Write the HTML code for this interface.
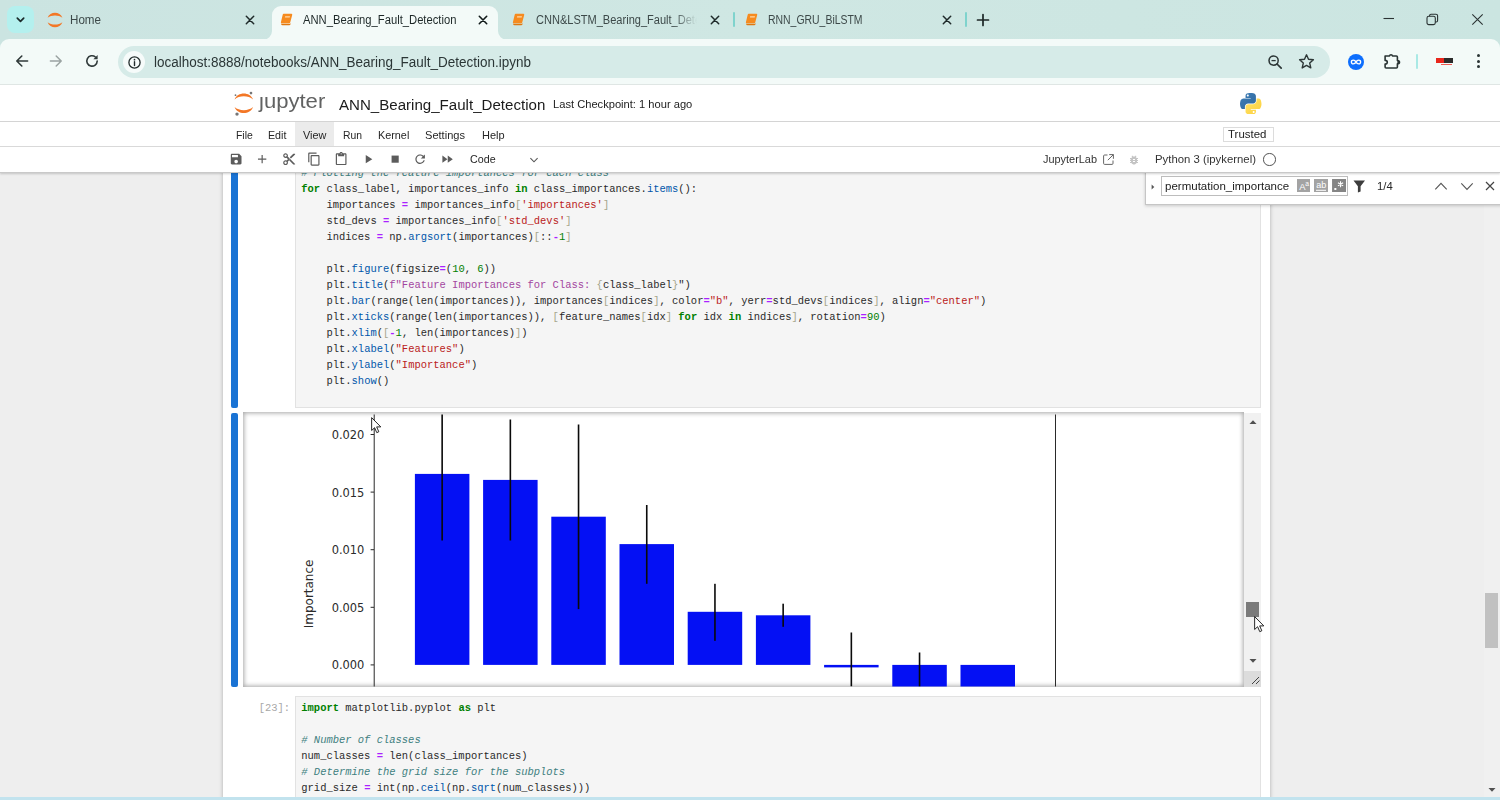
<!DOCTYPE html>
<html lang="en">
<head>
<meta charset="utf-8">
<title>ANN_Bearing_Fault_Detection</title>
<style>
*{box-sizing:border-box;margin:0;padding:0}
html,body{width:1500px;height:800px;overflow:hidden;background:#eeeeee;font-family:"Liberation Sans",sans-serif;color:#1f1f1f}
.abs{position:absolute}
#root{position:relative;width:1500px;height:800px;overflow:hidden}
/* ---------- browser chrome ---------- */
#tabstrip{left:0;top:0;width:1500px;height:52px;background:linear-gradient(90deg,#cbe4e1 0%,#cfe7e3 50%,#cbe5e1 100%)}
#toolbar{left:0;top:39px;width:1500px;height:46px;background:#f3faf8;border-radius:9px 9px 0 0;border-bottom:1px solid #dfe6e4}
#acttab{left:272px;top:6px;width:226px;height:34px;background:#f3faf8;border-radius:9px 9px 0 0}
.tabtxt{font-size:12px;line-height:14px;white-space:nowrap;color:#3d4949;top:13.3px}
.tsep{width:2px;height:15px;top:12px;background:#7fd3cd;border-radius:1px}
#omni{left:118px;top:46px;width:1212px;height:32px;border-radius:16px;background:#d6ebe8}
#url{left:153.6px;top:52.6px;font-size:14px;line-height:18px;color:#2b3636;white-space:nowrap;transform-origin:0 0;transform:scaleX(.963)}
/* ---------- jupyter ---------- */
#jhead{left:0;top:85px;width:1500px;height:37px;background:#fff;border-bottom:1px solid #d4d4d4}
#jmenu{left:0;top:122px;width:1500px;height:25px;background:#fff;border-bottom:1px solid #d9d9d9}
#jtool{left:0;top:147px;width:1500px;height:26px;background:#fff;border-bottom:1px solid #c9c9c9;box-shadow:0 1px 2px rgba(0,0,0,.18)}
.mi{top:128px;font-size:12.3px;line-height:14px;color:#262626;white-space:nowrap}
#nb{left:222.6px;top:172px;width:1047px;height:628px;background:#fff;box-shadow:0 0 4px rgba(0,0,0,.28)}
.coll{left:231.3px;width:7px;background:#1a73d4;border-radius:2px}
.ed{left:295px;width:966px;background:#f5f5f5;border:1px solid #e2e2e2}
.code{font-family:"Liberation Mono",monospace;font-size:10.48px;line-height:16px;white-space:pre;color:#2a2a2a;left:301px}
.k{color:#008000;font-weight:bold}.s{color:#ba2121}.n{color:#008000}.o{color:#aa22ff;font-weight:bold}.p{color:#0055aa}.c{color:#408080;font-style:italic}.b{color:#a6a68c}.fs{color:#a3469f}
</style>
</head>
<body>
<div id="root">
<!-- ================= BROWSER CHROME ================= -->
<div id="tabstrip" class="abs"></div>
<div id="toolbar" class="abs"></div>
<div id="acttab" class="abs"></div>
<!-- tab search button -->
<div class="abs" style="left:7px;top:6px;width:27px;height:27px;border-radius:8px;background:#b4f0ee"></div>
<svg class="abs" style="left:14px;top:15px" width="13" height="10" viewBox="0 0 13 10"><path d="M3.3 3.2 L6.5 6.4 L9.7 3.2" fill="none" stroke="#1c2b2b" stroke-width="1.7" stroke-linecap="round" stroke-linejoin="round"/></svg>
<!-- tab 1 : Home -->
<svg class="abs" style="left:46px;top:11px" width="18" height="18" viewBox="0 0 18 18"><path d="M1.6 6.8 C4 0.2 14 0.2 16.4 6.8 C12.6 3.6 5.4 3.6 1.6 6.8 Z" fill="#f37726"/><path d="M1.6 11.2 C4 17.8 14 17.8 16.4 11.2 C12.6 14.4 5.4 14.4 1.6 11.2 Z" fill="#f37726"/></svg>
<div class="abs tabtxt" style="left:70.4px;font-size:12px;transform-origin:0 0;transform:scaleX(.968)">Home</div>
<svg class="abs" style="left:245px;top:15px" width="10" height="10" viewBox="0 0 10 10"><path d="M1.3 1.3 L8.7 8.7 M8.7 1.3 L1.3 8.7" stroke="#1f2a2a" stroke-width="1.5" stroke-linecap="round"/></svg>
<!-- active tab curved feet -->
<svg class="abs" style="left:263px;top:31px" width="9" height="9" viewBox="0 0 9 9"><path d="M9 0 L9 9 L0 9 A9 9 0 0 0 9 0 Z" fill="#f3faf8"/></svg>
<svg class="abs" style="left:498px;top:31px" width="9" height="9" viewBox="0 0 9 9"><path d="M0 0 L0 9 L9 9 A9 9 0 0 1 0 0 Z" fill="#f3faf8"/></svg>
<!-- tab 2 : active -->
<svg class="abs book" style="left:279.5px;top:13px" width="13" height="13" viewBox="0 0 13 13"><path d="M3.6 0.8 H11.4 Q12.5 0.8 12.2 1.9 L10.2 9.6 Q10 10.5 9 10.5 H1.9 Q0.6 10.5 0.9 9.3 L2.7 1.8 Q2.9 0.8 3.6 0.8 Z" fill="#f68b1f"/><path d="M1.2 10.4 Q0.9 12.3 2.6 12.3 H9.2 Q10.2 12.3 10.5 11.2 L10.8 10 Q10.3 10.9 9.2 10.9 H2.4 Q1.5 10.9 1.2 10.4 Z" fill="#e0780f"/><path d="M5.2 3.2 H10 L9.7 4.5 H4.9 Z" fill="#ffd9a8"/></svg>
<div class="abs tabtxt" style="left:303px;color:#1c2727;font-size:12px;transform-origin:0 0;transform:scaleX(.935)">ANN_Bearing_Fault_Detection</div>
<svg class="abs" style="left:477.5px;top:15px" width="10" height="10" viewBox="0 0 10 10"><path d="M1.3 1.3 L8.7 8.7 M8.7 1.3 L1.3 8.7" stroke="#111a1a" stroke-width="1.6" stroke-linecap="round"/></svg>
<!-- tab 3 -->
<svg class="abs book" style="left:512px;top:13px" width="13" height="13" viewBox="0 0 13 13"><path d="M3.6 0.8 H11.4 Q12.5 0.8 12.2 1.9 L10.2 9.6 Q10 10.5 9 10.5 H1.9 Q0.6 10.5 0.9 9.3 L2.7 1.8 Q2.9 0.8 3.6 0.8 Z" fill="#f68b1f"/><path d="M1.2 10.4 Q0.9 12.3 2.6 12.3 H9.2 Q10.2 12.3 10.5 11.2 L10.8 10 Q10.3 10.9 9.2 10.9 H2.4 Q1.5 10.9 1.2 10.4 Z" fill="#e0780f"/><path d="M5.2 3.2 H10 L9.7 4.5 H4.9 Z" fill="#ffd9a8"/></svg>
<div class="abs tabtxt" style="left:535.5px;width:176px;overflow:hidden;font-size:12px;transform-origin:0 0;transform:scaleX(.92);-webkit-mask-image:linear-gradient(90deg,#000 0,#000 150px,transparent 175px);mask-image:linear-gradient(90deg,#000 0,#000 150px,transparent 175px)">CNN&amp;LSTM_Bearing_Fault_Detection</div>
<svg class="abs" style="left:710px;top:15px" width="10" height="10" viewBox="0 0 10 10"><path d="M1.3 1.3 L8.7 8.7 M8.7 1.3 L1.3 8.7" stroke="#1f2a2a" stroke-width="1.5" stroke-linecap="round"/></svg>
<div class="abs tsep" style="left:733px"></div>
<!-- tab 4 -->
<svg class="abs book" style="left:745px;top:13px" width="13" height="13" viewBox="0 0 13 13"><path d="M3.6 0.8 H11.4 Q12.5 0.8 12.2 1.9 L10.2 9.6 Q10 10.5 9 10.5 H1.9 Q0.6 10.5 0.9 9.3 L2.7 1.8 Q2.9 0.8 3.6 0.8 Z" fill="#f68b1f"/><path d="M1.2 10.4 Q0.9 12.3 2.6 12.3 H9.2 Q10.2 12.3 10.5 11.2 L10.8 10 Q10.3 10.9 9.2 10.9 H2.4 Q1.5 10.9 1.2 10.4 Z" fill="#e0780f"/><path d="M5.2 3.2 H10 L9.7 4.5 H4.9 Z" fill="#ffd9a8"/></svg>
<div class="abs tabtxt" style="left:768px;font-size:12px;transform-origin:0 0;transform:scaleX(.87)">RNN_GRU_BiLSTM</div>
<svg class="abs" style="left:942px;top:15px" width="10" height="10" viewBox="0 0 10 10"><path d="M1.3 1.3 L8.7 8.7 M8.7 1.3 L1.3 8.7" stroke="#1f2a2a" stroke-width="1.5" stroke-linecap="round"/></svg>
<div class="abs tsep" style="left:965px"></div>
<svg class="abs" style="left:976px;top:13px" width="14" height="14" viewBox="0 0 14 14"><path d="M7 1.5 V12.5 M1.5 7 H12.5" stroke="#1c2626" stroke-width="1.7" stroke-linecap="round"/></svg>
<!-- window controls -->
<svg class="abs" style="left:1382px;top:12px" width="14" height="14" viewBox="0 0 14 14"><path d="M1.5 6.5 H12" stroke="#2a3333" stroke-width="1.1"/></svg>
<svg class="abs" style="left:1426px;top:13px" width="13" height="13" viewBox="0 0 13 13"><rect x="1" y="3.3" width="8.3" height="8.3" rx="1.8" fill="none" stroke="#2a3333" stroke-width="1.1"/><path d="M3.6 3.2 V2.6 Q3.6 1.2 5 1.2 H10 Q11.6 1.2 11.6 2.8 V7.6 Q11.6 9 10.2 9 H9.4" fill="none" stroke="#2a3333" stroke-width="1.1"/></svg>
<svg class="abs" style="left:1471px;top:13px" width="13" height="13" viewBox="0 0 13 13"><path d="M1.3 1.3 L11.7 11.7 M11.7 1.3 L1.3 11.7" stroke="#2a3333" stroke-width="1.1"/></svg>
<!-- nav buttons -->
<svg class="abs" style="left:14px;top:53px" width="16" height="16" viewBox="0 0 16 16"><path d="M13.6 8 H3 M7.8 3 L2.8 8 L7.8 13" fill="none" stroke="#303a3a" stroke-width="1.6" stroke-linecap="round" stroke-linejoin="round"/></svg>
<svg class="abs" style="left:48px;top:53px" width="16" height="16" viewBox="0 0 16 16"><path d="M2.4 8 H13 M8.2 3 L13.2 8 L8.2 13" fill="none" stroke="#9aa3a2" stroke-width="1.5" stroke-linecap="round" stroke-linejoin="round"/></svg>
<svg class="abs" style="left:84px;top:53px" width="16" height="16" viewBox="0 0 16 16"><path d="M13.2 8 A5.2 5.2 0 1 1 11.4 4" fill="none" stroke="#303a3a" stroke-width="1.6" stroke-linecap="round"/><path d="M13.6 2 V6.2 H9.4 Z" fill="#303a3a"/></svg>

<div id="omni" class="abs"></div>
<div id="url" class="abs">localhost:8888/notebooks/ANN_Bearing_Fault_Detection.ipynb</div>
<!-- omnibox icons -->
<div class="abs" style="left:123px;top:51px;width:22px;height:22px;border-radius:11px;background:#f6fbfa"></div>
<svg class="abs" style="left:126.5px;top:54.5px" width="15" height="15" viewBox="0 0 15 15"><circle cx="7.5" cy="7.5" r="5.6" fill="none" stroke="#222c2c" stroke-width="1.3"/><path d="M7.5 6.8 V10.6" stroke="#222c2c" stroke-width="1.4" stroke-linecap="round"/><circle cx="7.5" cy="4.7" r=".85" fill="#222c2c"/></svg>
<svg class="abs" style="left:1267px;top:54px" width="16" height="16" viewBox="0 0 16 16"><circle cx="6.6" cy="6.6" r="4.6" fill="none" stroke="#2c3636" stroke-width="1.5"/><path d="M10 10 L14.2 14.2" stroke="#2c3636" stroke-width="1.7" stroke-linecap="round"/><path d="M4.5 6.6 H8.7" stroke="#2c3636" stroke-width="1.3"/></svg>
<svg class="abs" style="left:1298px;top:52.5px" width="17" height="17" viewBox="0 0 17 17"><path d="M8.5 1.8 L10.5 6.3 L15.4 6.8 L11.7 10.1 L12.8 14.9 L8.5 12.4 L4.2 14.9 L5.3 10.1 L1.6 6.8 L6.5 6.3 Z" fill="none" stroke="#2c3636" stroke-width="1.4" stroke-linejoin="round"/></svg>
<!-- extension icons -->
<div class="abs" style="left:1348px;top:54px;width:16px;height:16px;border-radius:8px;background:#0d6efd"></div>
<svg class="abs" style="left:1350px;top:58px" width="12" height="8" viewBox="0 0 12 8"><path d="M6 4 C4.8 1.6 1.4 1.4 1.4 4 C1.4 6.6 4.8 6.4 6 4 C7.2 1.6 10.6 1.4 10.6 4 C10.6 6.6 7.2 6.4 6 4 Z" fill="none" stroke="#fff" stroke-width="1.4"/></svg>
<svg class="abs" style="left:1383px;top:52px" width="18" height="18" viewBox="0 0 18 18"><path d="M2.1 4 H6.500 Q6.700 2.700 8 2.700 Q9.300 2.700 9.500 4 H13.400 Q14.400 4 14.400 5 V8.500 Q16.500 8.700 16.500 10.200 Q16.500 11.700 14.400 11.900 V15 Q14.400 16 13.400 16 H3.100 Q2.100 16 2.100 15 V12 Q4.300 11.900 4.300 10.200 Q4.300 8.500 2.100 8.400 Z" fill="none" stroke="#2a3434" stroke-width="1.600" stroke-linejoin="round"/><path d="M14.400 8.500 Q16.500 8.700 16.500 10.200 Q16.500 11.700 14.400 11.900 Z" fill="#2a3434"/></svg>
<div class="abs" style="left:1416px;top:53.5px;width:2px;height:15px;border-radius:1px;background:#a9e9e5"></div>
<div class="abs" style="left:1435.5px;top:58px;width:8px;height:5px;background:#e8261c"></div>
<div class="abs" style="left:1444px;top:58px;width:8.5px;height:5px;background:#2b2b2b"></div>
<div class="abs" style="left:1441px;top:63.5px;width:11px;height:1.5px;background:#e8261c;opacity:.75"></div>
<div class="abs" style="left:1477px;top:53.700px;width:3px;height:3px;border-radius:2px;background:#2a3434"></div>
<div class="abs" style="left:1477px;top:59.700px;width:3px;height:3px;border-radius:2px;background:#2a3434"></div>
<div class="abs" style="left:1477px;top:65.400px;width:3px;height:3px;border-radius:2px;background:#2a3434"></div>
<!-- ================= JUPYTER ================= -->
<div id="nb" class="abs"></div>
<div class="abs coll" style="top:166px;height:241.5px"></div>
<div class="abs ed" style="top:160px;height:248px"></div>
<div class="abs code" style="left:301.3px;top:164.5px"><span class="c"># Plotting the feature importances for each class</span></div>
<div class="abs code" style="left:301.3px;top:180.5px"><span class="k">for</span> class_label, importances_info <span class="k">in</span> class_importances.<span class="p">items</span>():</div>
<div class="abs code" style="left:301.3px;top:196.5px">    importances <span class="o">=</span> importances_info<span class="b">[</span><span class="s">'importances'</span><span class="b">]</span></div>
<div class="abs code" style="left:301.3px;top:212.5px">    std_devs <span class="o">=</span> importances_info<span class="b">[</span><span class="s">'std_devs'</span><span class="b">]</span></div>
<div class="abs code" style="left:301.3px;top:228.5px">    indices <span class="o">=</span> np.<span class="p">argsort</span>(importances)<span class="b">[</span>::<span class="o">-</span><span class="n">1</span><span class="b">]</span></div>
<div class="abs code" style="left:301.3px;top:260.5px">    plt.<span class="p">figure</span>(figsize<span class="o">=</span>(<span class="n">10</span>, <span class="n">6</span>))</div>
<div class="abs code" style="left:301.3px;top:276.5px">    plt.<span class="p">title</span>(<span class="fs">f"Feature Importances for Class: </span><span class="b">{</span>class_label<span class="b">}</span>")</div>
<div class="abs code" style="left:301.3px;top:292.5px">    plt.<span class="p">bar</span>(range(len(importances)), importances<span class="b">[</span>indices<span class="b">]</span>, color<span class="o">=</span><span class="s">"b"</span>, yerr<span class="o">=</span>std_devs<span class="b">[</span>indices<span class="b">]</span>, align<span class="o">=</span><span class="s">"center"</span>)</div>
<div class="abs code" style="left:301.3px;top:308.5px">    plt.<span class="p">xticks</span>(range(len(importances)), <span class="b">[</span>feature_names<span class="b">[</span>idx<span class="b">]</span> <span class="k">for</span> idx <span class="k">in</span> indices<span class="b">]</span>, rotation<span class="o">=</span><span class="n">90</span>)</div>
<div class="abs code" style="left:301.3px;top:324.5px">    plt.<span class="p">xlim</span>(<span class="b">[</span><span class="o">-</span><span class="n">1</span>, len(importances)<span class="b">]</span>)</div>
<div class="abs code" style="left:301.3px;top:340.5px">    plt.<span class="p">xlabel</span>(<span class="s">"Features"</span>)</div>
<div class="abs code" style="left:301.3px;top:356.5px">    plt.<span class="p">ylabel</span>(<span class="s">"Importance"</span>)</div>
<div class="abs code" style="left:301.3px;top:372.5px">    plt.<span class="p">show</span>()</div>
<div class="abs coll" style="top:412.7px;height:274.1px"></div>
<div class="abs" style="left:243.4px;top:412.2px;width:1000.6px;height:274.8px;background:#fff;box-shadow:inset 0 0 4.5px 1.2px rgba(0,0,0,.33)"></div>
<svg class="abs" style="left:243.4px;top:412.5px" width="1000.6" height="274" viewBox="243.4 412.5 1000.6 274" font-family="DejaVu Sans, Liberation Sans, sans-serif"><defs><clipPath id="cc"><rect x="245" y="414" width="998" height="272"/></clipPath></defs><g clip-path="url(#cc)"><rect x="415.3" y="473.4" width="54.5" height="191.0" fill="#0410f4"/><rect x="441.75" y="413" width="1.6" height="127.0" fill="#0a0a0a"/><rect x="483.5" y="479.4" width="54.5" height="185.0" fill="#0410f4"/><rect x="509.95" y="419" width="1.6" height="121.0" fill="#0a0a0a"/><rect x="551.7" y="516.2" width="54.5" height="148.2" fill="#0410f4"/><rect x="578.15" y="424" width="1.6" height="184.6" fill="#0a0a0a"/><rect x="619.9" y="543.6" width="54.5" height="120.8" fill="#0410f4"/><rect x="646.35" y="504.5" width="1.6" height="78.8" fill="#0a0a0a"/><rect x="688.1" y="611.3" width="54.5" height="53.1" fill="#0410f4"/><rect x="714.55" y="583.3" width="1.6" height="57.0" fill="#0a0a0a"/><rect x="756.3" y="614.8" width="54.5" height="49.6" fill="#0410f4"/><rect x="782.75" y="603.2" width="1.6" height="23.1" fill="#0a0a0a"/><rect x="824.5" y="664.4" width="54.5" height="2.5" fill="#0410f4"/><rect x="850.95" y="632" width="1.6" height="54.0" fill="#0a0a0a"/><rect x="892.7" y="664.4" width="54.5" height="30" fill="#0410f4"/><rect x="919.15" y="652" width="1.6" height="34.0" fill="#0a0a0a"/><rect x="960.9" y="664.4" width="54.5" height="30" fill="#0410f4"/><rect x="374.1" y="412" width="1" height="276" fill="#2a2a2a"/><rect x="1055.4" y="412" width="1" height="276" fill="#2a2a2a"/><rect x="371" y="433.5" width="3.4" height="1" fill="#2a2a2a"/><text x="364.8" y="438.5" font-size="11.45" text-anchor="end" fill="#2b2b2b">0.020</text><rect x="371" y="491.1" width="3.4" height="1" fill="#2a2a2a"/><text x="364.8" y="496.1" font-size="11.45" text-anchor="end" fill="#2b2b2b">0.015</text><rect x="371" y="548.7" width="3.4" height="1" fill="#2a2a2a"/><text x="364.8" y="553.7" font-size="11.45" text-anchor="end" fill="#2b2b2b">0.010</text><rect x="371" y="606.3" width="3.4" height="1" fill="#2a2a2a"/><text x="364.8" y="611.3" font-size="11.45" text-anchor="end" fill="#2b2b2b">0.005</text><rect x="371" y="663.9" width="3.4" height="1" fill="#2a2a2a"/><text x="364.8" y="668.9" font-size="11.45" text-anchor="end" fill="#2b2b2b">0.000</text><text transform="translate(313 593.4) rotate(-90)" font-size="12" text-anchor="middle" fill="#2b2b2b">Importance</text></g></svg>
<div class="abs" style="left:1244px;top:412.5px;width:16.5px;height:274px;background:#f1f1f1"></div>
<svg class="abs" style="left:1248.5px;top:419px" width="8" height="6" viewBox="0 0 8 6"><path d="M0.500 5 L4 1.200 L7.500 5 Z" fill="#505050"/></svg>
<svg class="abs" style="left:1248.5px;top:658px" width="8" height="6" viewBox="0 0 8 6"><path d="M0.500 1 L4 4.800 L7.500 1 Z" fill="#505050"/></svg>
<div class="abs" style="left:1246.3px;top:601.5px;width:12.8px;height:15.5px;background:#7b7b7b"></div>
<div class="abs" style="left:1244px;top:670.5px;width:16.5px;height:16px;background:#dcdcdc"></div>
<svg class="abs" style="left:1249px;top:674px" width="12" height="12" viewBox="0 0 12 12"><path d="M3 10 L10 3 M7 10 L10.500 6.500" stroke="#444" stroke-width="1"/></svg>
<div class="abs ed" style="top:696px;height:120px"></div>
<div class="abs code" style="left:258.7px;top:700.0px;color:#a8a8a8">[23]:</div>
<div class="abs code" style="left:301.3px;top:700.0px"><span class="k">import</span> matplotlib.pyplot <span class="k">as</span> plt</div>
<div class="abs code" style="left:301.3px;top:732.0px"><span class="c"># Number of classes</span></div>
<div class="abs code" style="left:301.3px;top:748.0px">num_classes <span class="o">=</span> len(class_importances)</div>
<div class="abs code" style="left:301.3px;top:764.0px"><span class="c"># Determine the grid size for the subplots</span></div>
<div class="abs code" style="left:301.3px;top:780.0px">grid_size <span class="o">=</span> int(np.<span class="p">ceil</span>(np.<span class="p">sqrt</span>(num_classes)))</div>
<svg class="abs" style="left:370.9px;top:417px" width="10.8" height="17.1" viewBox="0 0 12 19"><path d="M0.700 0.700 V15 L4 11.900 L6.400 17.400 L8.700 16.400 L6.300 11 H10.900 Z" fill="#fff" stroke="#111" stroke-width="1" stroke-linejoin="round"/></svg>
<svg class="abs" style="left:1253.8px;top:616.3px" width="10.8" height="17.1" viewBox="0 0 12 19"><path d="M0.700 0.700 V15 L4 11.900 L6.400 17.400 L8.700 16.400 L6.300 11 H10.900 Z" fill="#fff" stroke="#111" stroke-width="1" stroke-linejoin="round"/></svg>
<div class="abs" style="left:1484px;top:172px;width:16px;height:626px;background:#f0f0f0"></div>
<div class="abs" style="left:1485.3px;top:593px;width:12.7px;height:54.600px;background:#c1c1c1"></div>
<svg class="abs" style="left:1487.600px;top:786.500px" width="8" height="6" viewBox="0 0 8 6"><path d="M0.500 1 L4 4.800 L7.500 1 Z" fill="#505050"/></svg>
<div class="abs" style="left:1144.5px;top:165px;width:360px;height:40.300px;background:#fff;border:1px solid #c6c6c6;box-shadow:0 1px 3px rgba(0,0,0,.18)"></div>
<svg class="abs" style="left:1151px;top:183.500px" width="4" height="6" viewBox="0 0 4 6"><path d="M0.600 0.600 L3.300 3 L0.600 5.400 Z" fill="#555"/></svg>
<div class="abs" style="left:1161px;top:176.400px;width:187.300px;height:20px;border:1px solid #bdbdbd;background:#fff"></div>
<div class="abs " style="left:1164.7px;top:178.71px;font-size:11.8px;line-height:15px;white-space:nowrap;color:#1c1c1c;transform-origin:0 0;transform:scaleX(0.9760);">permutation_importance</div>
<svg class="abs" style="left:1296.5px;top:178.800px" width="13.9" height="13.700" viewBox="0 0 14 13.700"><rect width="14" height="13.700" fill="#a3a3a3"/><text x="2.200" y="11.300" font-size="9.500" fill="#fff" font-family="Liberation Sans, sans-serif">A</text><text x="8.300" y="6.800" font-size="6.800" fill="#fff" font-family="Liberation Sans, sans-serif">a</text></svg>
<svg class="abs" style="left:1314px;top:178.800px" width="14" height="13.700" viewBox="0 0 14 13.700"><rect width="14" height="13.700" fill="#a3a3a3"/><text x="2.300" y="9.300" font-size="9" fill="#fff" font-family="Liberation Sans, sans-serif">ab</text><rect x="2" y="10.800" width="10" height="1" fill="#fff"/></svg>
<svg class="abs" style="left:1331.6px;top:178.800px" width="14.1" height="13.700" viewBox="0 0 14 13.700"><rect width="14" height="13.700" fill="#858585"/><rect x="2.300" y="9" width="2" height="2" fill="#fff"/><path d="M8.500 2.200 V8.200 M5.900 3.700 L11.100 6.700 M11.100 3.700 L5.900 6.700" stroke="#fff" stroke-width="1.100"/></svg>
<svg class="abs" style="left:1352.500px;top:180px" width="12.500" height="13" viewBox="0 0 12.500 13"><path d="M0.500 0.600 H12 L7.600 6.200 V11.600 L4.900 12.600 V6.200 Z" fill="#3d3d3d"/></svg>
<div class="abs " style="left:1377.0px;top:178.71px;font-size:11.8px;line-height:15px;white-space:nowrap;color:#262626;transform-origin:0 0;transform:scaleX(0.9571);">1/4</div>
<svg class="abs" style="left:1433.500px;top:181px" width="14" height="11" viewBox="0 0 14 11"><path d="M1.300 8.400 L7 2.400 L12.700 8.400" fill="none" stroke="#555" stroke-width="1.100"/></svg>
<svg class="abs" style="left:1459.500px;top:181px" width="14" height="11" viewBox="0 0 14 11"><path d="M1.300 2.400 L7 8.400 L12.700 2.400" fill="none" stroke="#555" stroke-width="1.100"/></svg>
<svg class="abs" style="left:1484.500px;top:181.400px" width="10" height="10" viewBox="0 0 10 10"><path d="M1 1 L9 9 M9 1 L1 9" stroke="#444" stroke-width="1.200"/></svg>
<div class="abs" style="left:0;top:797.300px;width:1500px;height:3px;background:#c2e3ee"></div>

<div id="jtool" class="abs"></div>
<div id="jmenu" class="abs"></div>
<div id="jhead" class="abs"></div>
<svg class="abs" style="left:232px;top:90px" width="24" height="27" viewBox="0 0 24 27"><path d="M2.6 9.4 C5.4 1.4 18.2 1.4 21 9.4 C16.6 5.2 7 5.2 2.6 9.4 Z" fill="#f37726"/><path d="M2.6 17 C5.4 25 18.2 25 21 17 C16.6 21.2 7 21.2 2.6 17 Z" fill="#f37726"/><circle cx="19" cy="3.1" r="1.35" fill="#767677"/><circle cx="3.5" cy="5.2" r=".9" fill="#767677"/><circle cx="5" cy="24.1" r="1.7" fill="#767677"/></svg>
<div class="abs " style="left:258.8px;top:88.64px;font-size:19.8px;line-height:25px;white-space:nowrap;color:#616262;transform-origin:0 0;transform:scaleX(1.1156);">jupyter</div>
<div class="abs" style="left:259px;top:91.5px;width:6px;height:4.5px;background:#fff"></div>
<div class="abs " style="left:339.3px;top:95.16px;font-size:15.4px;line-height:19px;white-space:nowrap;color:#1b1b1b;transform-origin:0 0;transform:scaleX(0.9801);">ANN_Bearing_Fault_Detection</div>
<div class="abs " style="left:553.3px;top:96.98px;font-size:11.6px;line-height:14px;white-space:nowrap;color:#222;transform-origin:0 0;transform:scaleX(0.9607);">Last Checkpoint: 1 hour ago</div>
<svg class="abs" style="left:1240.3px;top:92.8px" width="21.5" height="21.4" viewBox="0 0 111.2 110.4"><defs><linearGradient id="pyb" x1="0" y1="0" x2="1" y2="1"><stop offset="0" stop-color="#3f7fb8"/><stop offset="1" stop-color="#2f689c"/></linearGradient><linearGradient id="pyy" x1="0" y1="0" x2="1" y2="1"><stop offset="0" stop-color="#ffe36a"/><stop offset="1" stop-color="#fccf3a"/></linearGradient></defs><path fill="url(#pyb)" d="M54.92 0c-4.58.02-8.96.41-12.81 1.09C30.760 3.090 28.700 7.290 28.700 15.030v10.220h26.810v3.410H18.640c-7.790 0-14.610 4.680-16.750 13.590-2.460 10.210-2.570 16.590 0 27.250 1.910 7.940 6.460 13.590 14.250 13.590h9.220V70.840c0-8.850 7.660-16.660 16.750-16.660h26.780c7.450 0 13.410-6.140 13.410-13.630V15.030c0-7.270-6.130-12.720-13.410-13.940C64.280.330 59.500-.020 54.920 0zM40.420 8.220c2.770 0 5.030 2.300 5.030 5.130 0 2.810-2.260 5.090-5.030 5.090-2.780 0-5.030-2.280-5.030-5.090 0-2.830 2.250-5.130 5.030-5.130z"/><path fill="url(#pyy)" d="M85.640 28.660v11.910c0 9.230-7.830 17-16.750 17H42.110c-7.340 0-13.410 6.280-13.410 13.630v25.530c0 7.270 6.320 11.540 13.410 13.630 8.490 2.500 16.630 2.950 26.780 0 6.750-1.950 13.410-5.890 13.410-13.630V86.500H55.520v-3.410h40.190c7.790 0 10.700-5.440 13.410-13.590 2.800-8.400 2.680-16.470 0-27.250-1.930-7.760-5.600-13.590-13.410-13.590H85.640zM70.580 93.310c2.780 0 5.030 2.280 5.030 5.090 0 2.830-2.250 5.130-5.030 5.130-2.770 0-5.030-2.300-5.030-5.130 0-2.810 2.260-5.090 5.030-5.090z"/></svg>
<div class="abs" style="left:295px;top:122px;width:39px;height:24px;background:#ebebeb"></div>
<div class="abs " style="left:235.5px;top:127.61px;font-size:11.8px;line-height:15px;white-space:nowrap;color:#262626;transform-origin:0 0;transform:scaleX(0.8835);">File</div>
<div class="abs " style="left:268.3px;top:127.61px;font-size:11.8px;line-height:15px;white-space:nowrap;color:#262626;transform-origin:0 0;transform:scaleX(0.9049);">Edit</div>
<div class="abs " style="left:303.3px;top:127.61px;font-size:11.8px;line-height:15px;white-space:nowrap;color:#262626;transform-origin:0 0;transform:scaleX(0.9226);">View</div>
<div class="abs " style="left:342.7px;top:127.61px;font-size:11.8px;line-height:15px;white-space:nowrap;color:#262626;transform-origin:0 0;transform:scaleX(0.8777);">Run</div>
<div class="abs " style="left:377.7px;top:127.61px;font-size:11.8px;line-height:15px;white-space:nowrap;color:#262626;transform-origin:0 0;transform:scaleX(0.9176);">Kernel</div>
<div class="abs " style="left:425.0px;top:127.61px;font-size:11.8px;line-height:15px;white-space:nowrap;color:#262626;transform-origin:0 0;transform:scaleX(0.9381);">Settings</div>
<div class="abs " style="left:481.7px;top:127.61px;font-size:11.8px;line-height:15px;white-space:nowrap;color:#262626;transform-origin:0 0;transform:scaleX(0.9312);">Help</div>
<div class="abs" style="left:1222.5px;top:126.5px;width:51px;height:15.5px;border:1px solid #dcdcdc;background:#fff"></div>
<div class="abs " style="left:1228.3px;top:127.28px;font-size:11.6px;line-height:14px;white-space:nowrap;color:#222;transform-origin:0 0;transform:scaleX(0.9872);">Trusted</div>
<svg class="abs" style="left:228.5px;top:152.3px" width="14.3" height="14.3" viewBox="0 0 24 24"><path fill="#5c5c5c" d="M17 3H5c-1.110 0-2 .9-2 2v14c0 1.100.890 2 2 2h14c1.100 0 2-.9 2-2V7l-4-4zm-5 16c-1.660 0-3-1.340-3-3s1.340-3 3-3 3 1.340 3 3-1.340 3-3 3zm3-10H5V5h10v4z"/></svg>
<svg class="abs" style="left:255.2px;top:152.3px" width="14.3" height="14.3" viewBox="0 0 24 24"><path fill="#5c5c5c" d="M19 13h-6v6h-2v-6H5v-2h6V5h2v6h6v2z"/></svg>
<svg class="abs" style="left:281.9px;top:152.3px" width="14.3" height="14.3" viewBox="0 0 24 24"><path fill="#5c5c5c" d="M9.640 7.640c.230-.5.360-1.050.360-1.640 0-2.210-1.790-4-4-4S2 3.790 2 6s1.790 4 4 4c.590 0 1.140-.130 1.640-.360L10 12l-2.360 2.360C7.140 14.130 6.590 14 6 14c-2.210 0-4 1.790-4 4s1.790 4 4 4 4-1.790 4-4c0-.590-.130-1.140-.360-1.640L12 14l7 7h3v-1L9.640 7.640zM6 8c-1.100 0-2-.890-2-2s.9-2 2-2 2 .890 2 2-.9 2-2 2zm0 12c-1.100 0-2-.890-2-2s.9-2 2-2 2 .890 2 2-.9 2-2 2zm6-7.500c-.280 0-.5-.220-.5-.5s.220-.5.500-.5.500.220.500.5-.220.500-.5.500zM19 3l-6 6 2 2 7-7V3z"/></svg>
<svg class="abs" style="left:307.4px;top:152.3px" width="14.3" height="14.3" viewBox="0 0 24 24"><path fill="#5c5c5c" d="M16 1H4c-1.100 0-2 .9-2 2v14h2V3h12V1zm3 4H8c-1.100 0-2 .9-2 2v14c0 1.100.9 2 2 2h11c1.100 0 2-.9 2-2V7c0-1.100-.9-2-2-2zm0 16H8V7h11v14z"/></svg>
<svg class="abs" style="left:334.4px;top:151.8px" width="14.3" height="14.3" viewBox="0 0 24 24"><path fill="#5c5c5c" d="M19 2h-4.180C14.400.840 13.300 0 12 0c-1.300 0-2.400.840-2.820 2H5c-1.100 0-2 .9-2 2v16c0 1.100.9 2 2 2h14c1.100 0 2-.9 2-2V4c0-1.100-.9-2-2-2zm-7 0c.550 0 1 .450 1 1s-.450 1-1 1-1-.450-1-1 .450-1 1-1zm7 18H5V4h2v3h10V4h2v16z"/></svg>
<svg class="abs" style="left:360.9px;top:152.3px" width="14.3" height="14.3" viewBox="0 0 24 24"><path fill="#5c5c5c" d="M8 5v14l11-7z"/></svg>
<svg class="abs" style="left:387.5px;top:152.3px" width="14.3" height="14.3" viewBox="0 0 24 24"><path fill="#5c5c5c" d="M6 6h12v12H6z"/></svg>
<svg class="abs" style="left:412.9px;top:152.3px" width="14.3" height="14.3" viewBox="0 0 24 24"><path fill="#5c5c5c" d="M17.650 6.350C16.200 4.900 14.210 4 12 4c-4.420 0-7.990 3.580-7.990 8s3.570 8 7.990 8c3.730 0 6.840-2.550 7.730-6h-2.080c-.820 2.330-3.040 4-5.650 4-3.310 0-6-2.690-6-6s2.690-6 6-6c1.660 0 3.140.690 4.220 1.780L13 11h7V4l-2.350 2.350z"/></svg>
<svg class="abs" style="left:439.6px;top:152.3px" width="14.3" height="14.3" viewBox="0 0 24 24"><path fill="#5c5c5c" d="M4 18l8.500-6L4 6v12zm9-12v12l8.500-6L13 6z"/></svg>
<div class="abs " style="left:470.2px;top:151.91px;font-size:11.8px;line-height:15px;white-space:nowrap;color:#262626;transform-origin:0 0;transform:scaleX(0.9075);">Code</div>
<svg class="abs" style="left:529px;top:156px" width="10" height="8" viewBox="0 0 10 8"><path d="M1.400 2.200 L5 5.800 L8.600 2.200" fill="none" stroke="#555" stroke-width="1.1"/></svg>
<div class="abs " style="left:1043.3px;top:152.28px;font-size:11.6px;line-height:14px;white-space:nowrap;color:#333;transform-origin:0 0;transform:scaleX(0.9408);">JupyterLab</div>
<svg class="abs" style="left:1102px;top:153px" width="13" height="13" viewBox="0 0 13 13"><path d="M5.500 2 H2.600 Q1.600 2 1.600 3 V10.400 Q1.600 11.400 2.600 11.400 H10 Q11 11.400 11 10.400 V7.500" fill="none" stroke="#666" stroke-width="1"/><path d="M7.200 1.600 H11.400 V5.800 M11.400 1.600 L5.800 7.200" fill="none" stroke="#666" stroke-width="1"/></svg>
<svg class="abs" style="left:1127.5px;top:154px" width="12" height="12" viewBox="0 0 24 24"><path fill="#c4c4c4" d="M20 8h-2.810c-.450-.780-1.070-1.450-1.820-1.960L17 4.410 15.590 3l-2.170 2.170C12.960 5.060 12.490 5 12 5c-.490 0-.960.060-1.410.170L8.410 3 7 4.410l1.620 1.630C7.880 6.550 7.260 7.220 6.810 8H4v2h2.090c-.5.330-.9.660-.9 1v1H4v2h2v1c0 .340.040.670.090 1H4v2h2.810c1.040 1.790 2.970 3 5.190 3s4.150-1.210 5.190-3H20v-2h-2.090c.050-.330.090-.660.090-1v-1h2v-2h-2v-1c0-.340-.040-.670-.090-1H20V8zm-6 8h-4v-2h4v2zm0-4h-4v-2h4v2z"/></svg>
<div class="abs " style="left:1155.0px;top:152.28px;font-size:11.6px;line-height:14px;white-space:nowrap;color:#333;transform-origin:0 0;transform:scaleX(0.9790);">Python 3 (ipykernel)</div>
<div class="abs" style="left:1263.300px;top:153.300px;width:12.400px;height:12.400px;border-radius:50%;border:1.100px solid #555"></div>

</div>
</body>
</html>
